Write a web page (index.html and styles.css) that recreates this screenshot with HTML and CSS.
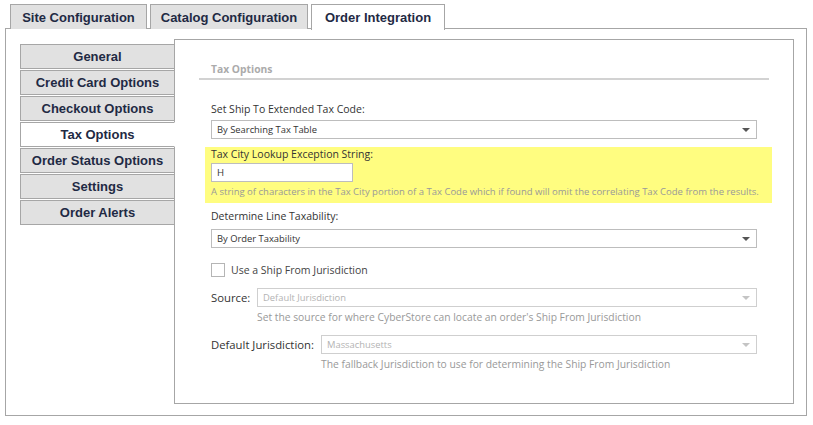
FILE: index.html
```html
<!DOCTYPE html>
<html>
<head>
<meta charset="utf-8">
<link rel="stylesheet" href="styles.css">
</head>
<body>
<div class="page">
  <div class="tabbar">
    <div class="tab t1">Site Configuration</div>
    <div class="tab t2">Catalog Configuration</div>
    <div class="tab t3 active">Order Integration</div>
  </div>
  <div class="panel">
    <div class="vtabs">
      <div class="vtab">General</div>
      <div class="vtab">Credit Card Options</div>
      <div class="vtab">Checkout Options</div>
      <div class="vtab active">Tax Options</div>
      <div class="vtab">Order Status Options</div>
      <div class="vtab">Settings</div>
      <div class="vtab">Order Alerts</div>
    </div>
    <div class="content">
      <div class="heading"><span>Tax Options</span></div>
      <div class="fields">
        <div class="label l1">Set Ship To Extended Tax Code:</div>
        <div class="select">By Searching Tax Table<span class="arrow"></span></div>

        <div class="highlight">
          <div class="label lh">Tax City Lookup Exception String:</div>
          <div class="input">H</div>
          <div class="help hh">A string of characters in the Tax City portion of a Tax Code which if found will omit the correlating Tax Code from the results.</div>
        </div>

        <div class="label l2">Determine Line Taxability:</div>
        <div class="select">By Order Taxability<span class="arrow"></span></div>

        <div class="check-row">
          <span class="checkbox"></span>
          <span class="check-label">Use a Ship From Jurisdiction</span>
        </div>

        <div class="inline-row r1">
          <span class="inline-label src">Source:</span>
          <div class="inline-field">
            <div class="select disabled">Default Jurisdiction<span class="arrow"></span></div>
            <div class="help">Set the source for where CyberStore can locate an order's Ship From Jurisdiction</div>
          </div>
        </div>

        <div class="inline-row r2">
          <span class="inline-label dj">Default Jurisdiction:</span>
          <div class="inline-field">
            <div class="select disabled">Massachusetts<span class="arrow"></span></div>
            <div class="help">The fallback Jurisdiction to use for determining the Ship From Jurisdiction</div>
          </div>
        </div>
      </div>
    </div>
  </div>
</div>
</body>
</html>
```

FILE: styles.css
```css
* { box-sizing: border-box; }
html, body { margin: 0; padding: 0; background: #fff; }
body { font-family: "Open Sans", "Noto Sans", sans-serif; color: #333; }

.page { padding: 4px 7px 0 5px; width: 813px; }

.tabbar { display: flex; padding-left: 5px; height: 24px; position: relative; z-index: 1; }
.tab {
  height: 25px;
  border: 1px solid #a6a6a6;
  border-bottom: none;
  background: #e1e1e1;
  font-family: "Liberation Sans", Arial, sans-serif;
  font-weight: bold;
  font-size: 13px;
  color: #1f2a44;
  display: flex; align-items: center; justify-content: center;
  margin-right: 3px;
}
.tab.t1 { width: 137px; }
.tab.t2 { width: 158px; margin-right: 3px; }
.tab.t3 { width: 134px; }
.tab.active { background: #fff; height: 26px; }

.panel {
  border: 1px solid #a6a6a6;
  height: 388px;
  width: 802px;
  display: flex;
  padding: 10px 12px 11px 14px;
}

.vtabs { width: 155px; margin-top: 5px; margin-right: -1px; position: relative; z-index: 1; }
.vtab {
  height: 25px;
  margin-bottom: 1px;
  border: 1px solid #a6a6a6;
  background: #e1e1e1;
  font-family: "Liberation Sans", Arial, sans-serif;
  font-weight: bold;
  font-size: 13px;
  color: #1f2a44;
  display: flex; align-items: center; justify-content: center;
}
.vtab.active { background: #fff; border-right-color: #fff; }

.content {
  flex: 1;
  border: 1px solid #a6a6a6;
  padding: 21px 0 0 24px;
}

.heading {
  width: 570px;
  border-bottom: 2px solid #d2d2d2;
  padding: 0 0 1px 12px;
  font-weight: bold;
  font-size: 10.3px;
  line-height: 16px;
  color: #ababab;
}

.fields { width: 567px; margin-top: 21px; margin-left: 6px; }
.fields > .label, .fields > .select, .check-row, .inline-row { margin-left: 6px; width: 546px; }

.label { font-size: 10.5px; line-height: 16px; color: #333; }
.l2 { margin-top: 5px; }

.select {
  position: relative;
  height: 19px;
  border: 1px solid #bdbdbd;
  background: #fff;
  font-size: 9.4px;
  line-height: 17px;
  padding-left: 5px;
  color: #333;
  margin-top: 3px;
}
.l2 + .select { margin-top: 5px; }
.arrow {
  position: absolute;
  right: 6px; top: 7px;
  width: 0; height: 0;
  border-left: 4px solid transparent;
  border-right: 4px solid transparent;
  border-top: 4px solid #555;
}
.select.disabled { color: #b3b3b3; border-color: #cfcfcf; }
.select.disabled .arrow { border-top-color: #c4c4c4; }

.highlight {
  background: #fffd80;
  margin-top: 8px;
  padding: 0 15px 4px 6px;
  width: 567px;
}
.lh { line-height: 14px; padding-top: 0; }
.input {
  width: 142px; height: 19px;
  border: 1px solid #bdbdbd;
  background: #fff;
  margin-top: 2px;
  font-size: 9.6px; line-height: 17px;
  padding-left: 5px; color: #333;
}
.help { font-size: 10.3px; line-height: 14px; color: #999; margin-top: 3px; white-space: nowrap; }
.hh { margin-top: 3px; font-size: 9.5px; }

.check-row { display: flex; align-items: center; margin-top: 14px; height: 16px; }
.checkbox { width: 14px; height: 14px; border: 1px solid #b5b5b5; background: #fff; margin-right: 6px; }
.check-label { font-size: 10.5px; color: #444; }

.inline-row { display: flex; align-items: flex-start; }
.r1 { margin-top: 10px; }
.r2 { margin-top: 11px; }
.inline-label { font-size: 11.3px; line-height: 19px; color: #333; white-space: nowrap; }
.inline-label.src { width: 46px; }
.inline-label.dj { width: 110px; }
.inline-field { flex: 1; }
.inline-field .select { margin-top: 0; }
```
